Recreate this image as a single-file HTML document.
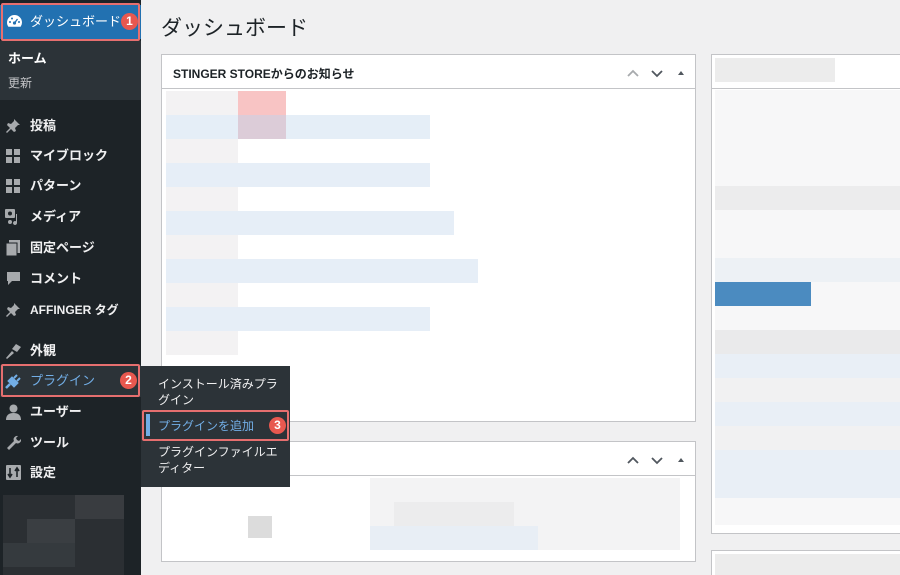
<!DOCTYPE html>
<html><head><meta charset="utf-8"><style>
*{margin:0;padding:0;box-sizing:border-box}
html,body{width:900px;height:575px;overflow:hidden}
body{background:#f0f0f1;font-family:"Liberation Sans","Noto Sans CJK JP",sans-serif;position:relative}
.a{position:absolute}
#side{left:0;top:0;width:141px;height:575px;background:#1d2327}
.mi{position:absolute;left:0;width:141px;height:30px;color:#f0f0f1;font-size:13px;line-height:30px;padding-left:30px;font-weight:bold}
.panel{position:absolute;background:#fff;border:1px solid #c3c4c7}
.hd{border-bottom:1px solid #c3c4c7;height:34px}
.b{position:absolute}
.badge{position:absolute;width:17px;height:17px;border-radius:50%;background:#e8584f;color:#fff;font-size:12px;font-weight:bold;line-height:17px;text-align:center;z-index:12}
.red{position:absolute;border:2px solid #e66f6f;border-radius:2px;z-index:11}
.fly{z-index:10}
</style></head><body>
<div id="side" class="a"></div>
<div class="a" style="left:0;top:5px;width:141px;height:34px;background:#2271b1"></div>
<div class="mi" style="top:7px;font-weight:normal;color:#fff">ダッシュボード</div>
<svg class="a" style="left:6px;top:14px" width="17" height="14" viewBox="0 0 17 14"><path d="M8.5 1A7.5 7.5 0 0 0 1 8.5c0 1.7.5 3 1.4 4.2h12.2A7 7 0 0 0 16 8.5 7.5 7.5 0 0 0 8.5 1z" fill="#fff"/><circle cx="8.5" cy="9" r="1.6" fill="#2271b1"/><path d="M8.5 9l3-4" stroke="#2271b1" stroke-width="1.3"/><circle cx="4" cy="8" r="1" fill="#2271b1"/><circle cx="6" cy="4.5" r="1" fill="#2271b1"/><circle cx="13" cy="8" r="1" fill="#2271b1"/></svg>
<div class="red" style="left:1px;top:3px;width:139px;height:38px"></div>
<div class="badge" style="left:121px;top:13px">1</div>
<div class="a" style="left:0;top:41px;width:141px;height:59px;background:#2c3338"></div>
<div class="a" style="left:8px;top:48px;color:#fff;font-size:13px;font-weight:bold">ホーム</div>
<div class="a" style="left:8px;top:74px;color:#c3c4c7;font-size:12px">更新</div>

<div class="mi" style="top:111px">投稿</div>
<svg class="a" style="left:5px;top:118px" width="16" height="16" viewBox="0 0 16 16"><path d="M9 1l6 6-2 0-3 3 1 3-2 1-3-3-4 4-1-1 4-4-3-3 1-2 3 1 3-3z" fill="#a7aaad"/></svg>
<div class="mi" style="top:141px">マイブロック</div>
<svg class="a" style="left:6px;top:149px" width="14" height="14"><rect x="0" y="0" width="6" height="6" fill="#a7aaad"/><rect x="8" y="0" width="6" height="6" fill="#a7aaad"/><rect x="0" y="8" width="6" height="6" fill="#a7aaad"/><rect x="8" y="8" width="6" height="6" fill="#a7aaad"/></svg>
<div class="mi" style="top:171px">パターン</div>
<svg class="a" style="left:6px;top:179px" width="14" height="14"><rect x="0" y="0" width="6" height="6" fill="#a7aaad"/><rect x="8" y="0" width="6" height="6" fill="#a7aaad"/><rect x="0" y="8" width="6" height="6" fill="#a7aaad"/><rect x="8" y="8" width="6" height="6" fill="#a7aaad"/></svg>
<div class="mi" style="top:202px">メディア</div>
<svg class="a" style="left:5px;top:209px" width="17" height="17" viewBox="0 0 17 17"><rect x="0" y="0" width="10" height="9" rx="1" fill="#a7aaad"/><circle cx="5" cy="4.5" r="2" fill="#1d2327"/><path d="M12 5v9a2 2 0 1 1-1-1.7V5z" fill="#a7aaad"/><circle cx="5" cy="13" r="2" fill="#a7aaad"/></svg>
<div class="mi" style="top:233px">固定ページ</div>
<svg class="a" style="left:6px;top:240px" width="15" height="17"><rect x="3" y="0" width="11" height="13" fill="#a7aaad"/><rect x="0" y="3" width="11" height="13" fill="#a7aaad" stroke="#1d2327"/></svg>
<div class="mi" style="top:264px">コメント</div>
<svg class="a" style="left:6px;top:271px" width="15" height="16"><path d="M1 1h13v9H6l-4 4v-4H1z" fill="#a7aaad"/></svg>
<div class="mi" style="top:295px;font-size:12px">AFFINGER タグ</div>
<svg class="a" style="left:5px;top:302px" width="16" height="16" viewBox="0 0 16 16"><path d="M9 1l6 6-2 0-3 3 1 3-2 1-3-3-4 4-1-1 4-4-3-3 1-2 3 1 3-3z" fill="#a7aaad"/></svg>
<div class="mi" style="top:336px">外観</div>
<svg class="a" style="left:5px;top:343px" width="17" height="16" viewBox="0 0 17 16"><path d="M1 15l6-7 2 2-7 6zM7 6l4-5 5 3-4 5z" fill="#a7aaad"/></svg>
<div class="a" style="left:0;top:365px;width:141px;height:32px;background:#2c3338"></div>
<div class="mi" style="top:366px;color:#72aee6;font-weight:normal">プラグイン</div>
<svg class="a" style="left:5px;top:373px" width="17" height="16" viewBox="0 0 17 16"><path d="M1 15l4-4M4 8l5 5 3-3-5-5z" stroke="#72aee6" stroke-width="2.5" fill="#72aee6"/><path d="M9 5l3-3M12 8l3-3" stroke="#72aee6" stroke-width="2"/></svg>
<div class="red" style="left:1px;top:364px;width:139px;height:33px"></div>
<div class="badge" style="left:120px;top:372px">2</div>
<div class="mi" style="top:397px">ユーザー</div>
<svg class="a" style="left:6px;top:404px" width="15" height="16"><circle cx="7.5" cy="4.5" r="4" fill="#a7aaad"/><path d="M0 16c0-5 3-7 7.5-7S15 11 15 16z" fill="#a7aaad"/></svg>
<div class="mi" style="top:428px">ツール</div>
<svg class="a" style="left:5px;top:434px" width="16" height="16" viewBox="0 0 16 16"><path d="M2 14l7-7a3.5 3.5 0 0 1 4-5l-2 2 1 2 2 1 2-2a3.5 3.5 0 0 1-5 4l-7 7z" fill="#a7aaad"/></svg>
<div class="mi" style="top:458px">設定</div>
<svg class="a" style="left:6px;top:465px" width="15" height="15"><rect width="15" height="15" rx="1" fill="#a7aaad"/><path d="M4 3v9M2 9l2 3 2-3M11 12V3M9 6l2-3 2 3" stroke="#1d2327" stroke-width="1.6" fill="none"/></svg>
<div class="a" style="left:3px;top:495px;width:121px;height:80px;background:#2b2f33"></div>
<div class="a" style="left:27px;top:519px;width:48px;height:24px;background:#3a3e42"></div>
<div class="a" style="left:75px;top:495px;width:49px;height:24px;background:#393c40"></div>
<div class="a" style="left:3px;top:543px;width:72px;height:24px;background:#353a3e"></div>

<!-- main -->
<div class="a" style="left:161px;top:12px;font-size:21px;color:#1d2327">ダッシュボード</div>
<div class="panel" style="left:161px;top:54px;width:535px;height:368px">
<div class="hd"><div class="a" style="left:11px;top:10px;font-size:12px;font-weight:bold;color:#1d2327">STINGER STOREからのお知らせ</div>
<svg class="a" style="left:464px;top:12px" width="60" height="12"><path d="M2 9l5-5 5 5" stroke="#a7aaad" stroke-width="1.8" fill="none"/><path d="M26 4l5 5 5-5" stroke="#50575e" stroke-width="1.8" fill="none"/><path d="M52 8l3-4 3 4z" fill="#50575e"/></svg></div>
</div>
<div class="b" style="left:166px;top:91px;width:72px;height:264px;background:#f3f2f3"></div>
<div class="b" style="left:238px;top:91px;width:48px;height:24px;background:#f8c4c4"></div>
<div class="b" style="left:166px;top:115px;width:264px;height:24px;background:#e5eef7"></div>
<div class="b" style="left:238px;top:115px;width:48px;height:24px;background:#dcccd8"></div>
<div class="b" style="left:166px;top:163px;width:264px;height:24px;background:#e6eef7"></div>
<div class="b" style="left:166px;top:211px;width:288px;height:24px;background:#e6eef7"></div>
<div class="b" style="left:166px;top:259px;width:312px;height:24px;background:#e6eef7"></div>
<div class="b" style="left:166px;top:307px;width:264px;height:24px;background:#e6eef7"></div>

<div class="panel" style="left:161px;top:441px;width:535px;height:121px">
<div class="hd"><svg class="a" style="left:464px;top:12px" width="60" height="12"><path d="M2 9l5-5 5 5" stroke="#50575e" stroke-width="1.8" fill="none"/><path d="M26 4l5 5 5-5" stroke="#50575e" stroke-width="1.8" fill="none"/><path d="M52 8l3-4 3 4z" fill="#50575e"/></svg></div>
</div>
<div class="b" style="left:370px;top:478px;width:310px;height:72px;background:#f3f3f4"></div>
<div class="b" style="left:394px;top:502px;width:120px;height:24px;background:#ececed"></div>
<div class="b" style="left:370px;top:526px;width:168px;height:24px;background:#e8eef5"></div>
<div class="b" style="left:248px;top:516px;width:24px;height:22px;background:#dcdcdc"></div>

<div class="panel" style="left:711px;top:54px;width:200px;height:480px;border-right:none">
<div class="hd"></div></div>
<div class="b" style="left:715px;top:58px;width:120px;height:24px;background:#ececec"></div>
<div class="b" style="left:715px;top:90px;width:185px;height:435px;background:#f7f7f8"></div>
<div class="b" style="left:715px;top:186px;width:185px;height:24px;background:#ececed"></div>
<div class="b" style="left:715px;top:258px;width:185px;height:24px;background:#edf1f5"></div>
<div class="b" style="left:715px;top:282px;width:96px;height:24px;background:#4b8bc0"></div>
<div class="b" style="left:715px;top:330px;width:185px;height:24px;background:#eaeaeb"></div>
<div class="b" style="left:715px;top:354px;width:185px;height:144px;background:#e9eff6"></div>
<div class="b" style="left:715px;top:378px;width:185px;height:24px;background:#f1f1f2"></div>
<div class="b" style="left:715px;top:426px;width:185px;height:24px;background:#f1f1f2"></div>
<div class="panel" style="left:711px;top:550px;width:200px;height:40px"></div>
<div class="b" style="left:715px;top:554px;width:185px;height:21px;background:#ececec"></div>

<!-- submenu flyout (on top) -->
<div class="a fly" style="left:141px;top:366px;width:149px;height:121px;background:#2c3338"></div>
<div class="a fly" style="left:158px;top:376px;width:125px;color:#f0f0f1;font-size:12px;line-height:16px">インストール済みプラグイン</div>
<div class="a fly" style="left:146px;top:414px;width:4px;height:22px;background:#72aee6"></div>
<div class="a fly" style="left:158px;top:417px;color:#72aee6;font-size:12px">プラグインを追加</div>
<div class="red" style="left:142px;top:410px;width:147px;height:31px"></div>
<div class="badge" style="left:269px;top:417px">3</div>
<div class="a fly" style="left:158px;top:444px;width:125px;color:#f0f0f1;font-size:12px;line-height:16px">プラグインファイルエディター</div>
</body></html>
